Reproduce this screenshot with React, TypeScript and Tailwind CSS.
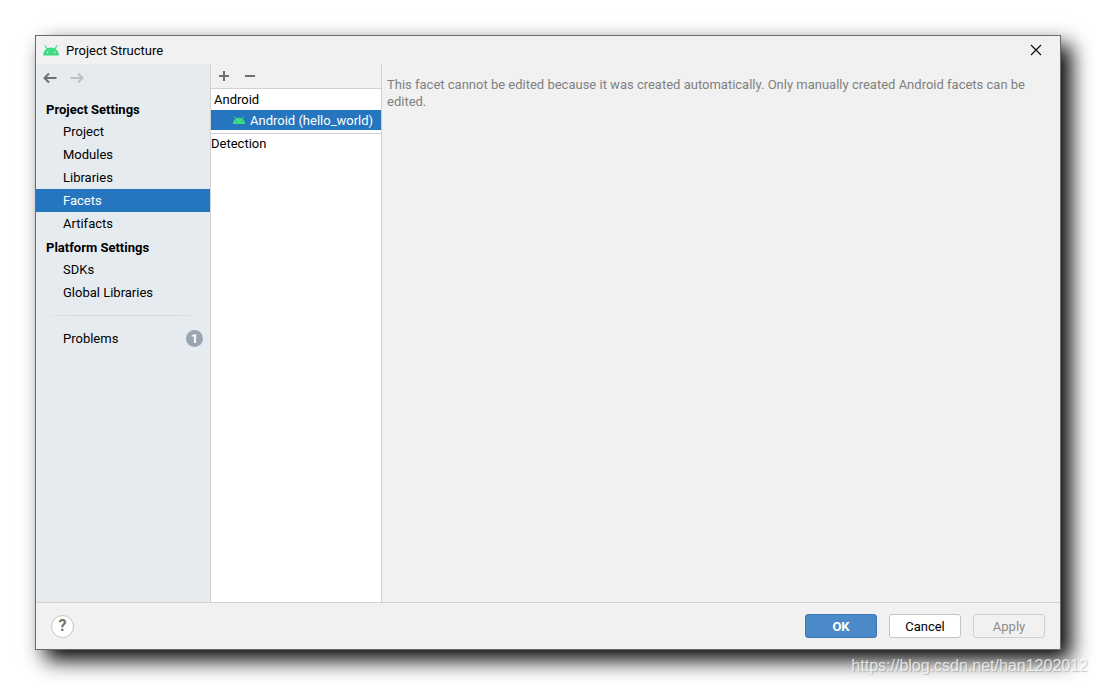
import clsx from 'clsx'

const SECTIONS = [
  { title: 'Project Settings', items: ['Project', 'Modules', 'Libraries', 'Facets', 'Artifacts'] },
  { title: 'Platform Settings', items: ['SDKs', 'Global Libraries'] },
]

function AndroidIcon({ className, eyes }: { className?: string; eyes: string }) {
  return (
    <svg viewBox="0 0 16 11" className={className} aria-hidden="true">
      <path d="M2.2 0.8L4.2 4M13.8 0.8L11.8 4" stroke="#3ddc84" strokeWidth="1.2" strokeLinecap="round" />
      <path d="M0 10.6C0.3 5.500 3.6 2.4 8 2.4s7.7 3.100 8 8.200z" fill="#3ddc84" />
      <circle cx="4.5" cy="7.3" r="0.8" fill={eyes} />
      <circle cx="11.5" cy="7.3" r="0.8" fill={eyes} />
    </svg>
  )
}

function Arrow({ className }: { className?: string }) {
  return (
    <svg width="14" height="12" viewBox="0 0 14 12" fill="none" stroke="currentColor" strokeWidth="2" className={className}>
      <path d="M13.500 6H2M6 1.500L1.500 6L6 10.500" />
    </svg>
  )
}

function Sidebar() {
  return (
    <nav className="w-[175px] shrink-0 border-r border-[#d1d1d1] bg-[#e6ebf0]">
      <div className="flex h-[33px] items-start gap-[13px] pt-2 pl-[7px]">
        <button type="button" aria-label="Back" className="text-[#6e6e6e]">
          <Arrow />
        </button>
        <button type="button" aria-label="Forward" disabled className="text-[#bdbfc1]">
          <Arrow className="rotate-180" />
        </button>
      </div>

      {SECTIONS.map((section) => (
        <section key={section.title}>
          <h2 className="h-[23px] pl-[10px] leading-[25px] font-bold">{section.title}</h2>
          <ul>
            {section.items.map((item) => (
              <li key={item}>
                <a
                  href="#"
                  className={clsx(
                    'block h-[23px] pl-[27px] leading-[23px]',
                    item === 'Facets' && 'bg-[#2675bf] text-white',
                  )}
                >
                  {item}
                </a>
              </li>
            ))}
          </ul>
        </section>
      ))}

      <div className="mx-2 my-[11px] h-px bg-[linear-gradient(to_right,transparent,#d3d6d9_20%,#d3d6d9_80%,transparent)]" />

      <a href="#" className="flex h-[23px] items-center justify-between pr-[7px] pl-[27px]">
        Problems
        <span className="flex size-[17px] items-center justify-center rounded-full bg-[#99a5b2] font-bold text-white">
          1
        </span>
      </a>
    </nav>
  )
}

function FacetList() {
  return (
    <div className="w-[171px] shrink-0 border-r border-[#d1d1d1] bg-white">
      <div className="flex h-[25px] items-center gap-[14px] border-b border-[#d1d1d1] bg-[#f1f1f1] pl-[7px] text-[#6e6e6e]">
        <button type="button" aria-label="Add">
          <svg width="12" height="12" viewBox="0 0 12 12" stroke="currentColor" strokeWidth="2">
            <path d="M6 1v10M1 6h10" />
          </svg>
        </button>
        <button type="button" aria-label="Remove">
          <svg width="12" height="12" viewBox="0 0 12 12" stroke="currentColor" strokeWidth="2">
            <path d="M1 6h10" />
          </svg>
        </button>
      </div>
      <ul>
        <li>
          <a href="#" className="block h-[21px] pl-[3px] leading-[21px]">Android</a>
        </li>
        <li>
          <a href="#" className="flex h-5 items-center gap-[5px] bg-[#2675bf] pl-[22px] whitespace-nowrap text-white">
            <AndroidIcon className="w-3" eyes="#2675bf" />
            Android (hello_world)
          </a>
        </li>
        <li className="mt-[3px] border-t border-[#d1d1d1]">
          <a href="#" className="block h-5 leading-5">Detection</a>
        </li>
      </ul>
    </div>
  )
}

export default function App() {
  return (
    <div className="relative flex min-h-screen flex-col bg-white p-[35px] font-[Roboto,sans-serif] text-[13px] leading-[17px] text-black">
      <main className="flex flex-1 flex-col border border-[#6b6b6b] bg-[#f1f1f1] shadow-[10px_10px_20px_#000]">
        <header className="flex h-7 items-center pr-[18px] pl-[7px]">
          <AndroidIcon className="w-4" eyes="#f1f1f1" />
          <h1 className="ml-[7px]">Project Structure</h1>
          <button type="button" aria-label="Close" className="ml-auto">
            <svg width="12" height="12" viewBox="0 0 12 12" stroke="#111" strokeWidth="1.2">
              <path d="M1 1l10 10M11 1L1 11" />
            </svg>
          </button>
        </header>

        <div className="flex flex-1">
          <Sidebar />
          <FacetList />
          <p className="flex-1 pt-3 pr-5 pl-[5px] text-[#808080]">
            This facet cannot be edited because it was created automatically. Only manually created Android facets can be
            edited.
          </p>
        </div>

        <footer className="flex h-[47px] items-center gap-3 border-t border-[#d1d1d1] px-[15px]">
          <button
            type="button"
            aria-label="Help"
            className="mr-auto flex size-[23px] items-center justify-center rounded-full border border-[#c4c4c4] bg-white text-base font-bold text-[#6e6e6e]"
          >
            ?
          </button>
          <button type="button" className="h-6 w-[72px] rounded-[3px] border border-[#3d75b3] bg-[#4c89c9] font-bold text-white">
            OK
          </button>
          <button type="button" className="h-6 w-[72px] rounded-[3px] border border-[#c4c4c4] bg-white">
            Cancel
          </button>
          <button type="button" disabled className="h-6 w-[72px] rounded-[3px] border border-[#cfcfcf] text-[#8c8c8c]">
            Apply
          </button>
        </footer>
      </main>

      <span className="absolute right-2 bottom-[7px] font-['Liberation_Sans',sans-serif] text-base leading-6 text-white/75 [text-shadow:1px_1px_1px_#0003]">
        https://blog.csdn.net/han1202012
      </span>
    </div>
  )
}
